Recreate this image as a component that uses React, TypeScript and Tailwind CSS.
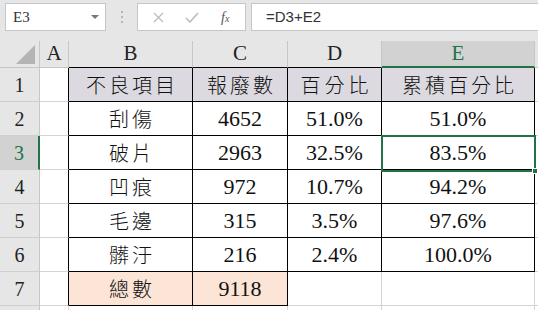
import React from 'react';

type CellProps = {
  className: string;
  children?: React.ReactNode;
};

function Cell({ className, children }: CellProps) {
  return (
    <div className={`box-border shrink-0 flex items-center justify-center h-full ${className}`}>
      {children}
    </div>
  );
}

const rows = [
  { n: '2', item: '刮傷', qty: '4652', pct: '51.0%', cum: '51.0%' },
  { n: '3', item: '破片', qty: '2963', pct: '32.5%', cum: '83.5%' },
  { n: '4', item: '凹痕', qty: '972', pct: '10.7%', cum: '94.2%' },
  { n: '5', item: '毛邊', qty: '315', pct: '3.5%', cum: '97.6%' },
  { n: '6', item: '髒汙', qty: '216', pct: '2.4%', cum: '100.0%' },
];

export default function App() {
  return (
    <div className="w-[538px] h-[310px] overflow-hidden bg-white text-[#111] font-['Liberation_Serif','Times_New_Roman',serif]">
      {/* Formula bar */}
      <div className="h-[41px] bg-[#e6e6e6] flex items-start pt-[3px]">
        <div className="ml-[5px] w-[101px] h-[28px] box-border bg-white border border-[#c6c6c6] flex items-center justify-between pl-[7px] pr-[6px]">
          <span className="text-[15px] text-[#333]">E3</span>
          <span className="w-0 h-0 border-l-[4px] border-r-[4px] border-t-[4px] border-l-transparent border-r-transparent border-t-[#777]" />
        </div>
        <div className="w-[31px] h-[28px] flex flex-col items-center justify-center gap-[3px]">
          <span className="w-[2px] h-[2px] bg-[#b5b5b5]" />
          <span className="w-[2px] h-[2px] bg-[#b5b5b5]" />
          <span className="w-[2px] h-[2px] bg-[#b5b5b5]" />
        </div>
        <div className="w-[109px] h-[28px] box-border bg-white border border-[#c6c6c6] flex items-center">
          <svg className="ml-[15px]" width="11" height="11" viewBox="0 0 11 11">
            <path d="M1 1 L10 10 M10 1 L1 10" stroke="#bcbcbc" strokeWidth="1.3" />
          </svg>
          <svg className="ml-[21px]" width="14" height="11" viewBox="0 0 14 11">
            <path d="M1 6 L5 10 L13 1" stroke="#bcbcbc" strokeWidth="1.6" fill="none" />
          </svg>
          <span className="ml-[22px] text-[14px] italic text-[#555]">
            f<span className="text-[10px]">x</span>
          </span>
        </div>
        <div className="ml-[5px] flex-1 h-[28px] box-border bg-white border border-r-0 border-[#c6c6c6] flex items-center pl-[14px]">
          <span className="text-[15px] text-[#333] font-['Liberation_Sans',sans-serif]">=D3+E2</span>
        </div>
      </div>

      {/* Grid */}
      <div className="relative">
        {/* column headers */}
        <div className="flex h-[27px] bg-[#e6e6e6] text-[21px] text-[#222]">
          <Cell className="w-[40px] border-r border-b border-[#c6c6c6] items-end justify-end pr-[4px] pb-[3px]">
            <svg width="19" height="19" viewBox="0 0 19 19">
              <path d="M19 0 L19 19 L0 19 Z" fill="#b4b4b4" />
            </svg>
          </Cell>
          <Cell className="w-[29px] border-r border-r-[#c6c6c6] border-b border-b-[#c6c6c6]">A</Cell>
          <Cell className="w-[124px] border-r border-r-[#c6c6c6] border-b border-b-black">B</Cell>
          <Cell className="w-[95px] border-r border-r-[#c6c6c6] border-b border-b-black">C</Cell>
          <Cell className="w-[94px] border-r border-r-[#c6c6c6] border-b border-b-black">D</Cell>
          <Cell className="w-[153px] bg-[#d2d2d2] text-[#217346] border-r border-r-[#c6c6c6] border-b-2 border-b-[#217346]">E</Cell>
          <Cell className="w-[3px] border-b border-[#c6c6c6]" />
        </div>

        {/* row 1: table header */}
        <div className="flex h-[34px] text-[20px] font-['Noto_Sans_CJK_TC',sans-serif] font-light">
          <Cell className="w-[40px] bg-[#e6e6e6] text-[#222] font-['Liberation_Serif',serif] font-normal border-r border-r-[#c6c6c6] border-b border-b-[#cfcfcf]">1</Cell>
          <Cell className="w-[29px] border-r border-r-black border-b border-b-[#d4d4d4]" />
          <Cell className="w-[124px] bg-[#dcdae0] border-r border-b border-black tracking-[3px] pl-[3px]">不良項目</Cell>
          <Cell className="w-[95px] bg-[#dcdae0] border-r border-b border-black tracking-[3px] pl-[3px]">報廢數</Cell>
          <Cell className="w-[94px] bg-[#dcdae0] border-r border-b border-black tracking-[4px] pl-[4px]">百分比</Cell>
          <Cell className="w-[153px] bg-[#dcdae0] border-r border-b border-black tracking-[3px] pl-[3px]">累積百分比</Cell>
          <Cell className="w-[3px] border-b border-[#d4d4d4]" />
        </div>

        {rows.map((r) => (
          <div key={r.n} className="flex h-[34px] text-[22px]">
            {r.n === '3' ? (
              <Cell className="w-[40px] bg-[#d2d2d2] text-[20px] text-[#217346] border-r-2 border-r-[#217346] border-b border-b-[#cfcfcf]">{r.n}</Cell>
            ) : (
              <Cell className="w-[40px] bg-[#e6e6e6] text-[20px] text-[#222] border-r border-r-[#c6c6c6] border-b border-b-[#cfcfcf]">{r.n}</Cell>
            )}
            <Cell className="w-[29px] border-r border-r-black border-b border-b-[#d4d4d4]" />
            <Cell className="w-[124px] border-r border-b border-black text-[20px] font-light font-['Noto_Sans_CJK_TC',sans-serif] tracking-[3px] pl-[3px]">{r.item}</Cell>
            <Cell className="w-[95px] border-r border-b border-black">{r.qty}</Cell>
            <Cell className="w-[94px] border-r border-b border-black">{r.pct}</Cell>
            <Cell className="w-[153px] border-r border-b border-black">{r.cum}</Cell>
            <Cell className="w-[3px] border-b border-[#d4d4d4]" />
          </div>
        ))}

        {/* row 7: total */}
        <div className="flex h-[34px] text-[22px]">
          <Cell className="w-[40px] bg-[#e6e6e6] text-[20px] text-[#222] border-r border-r-[#c6c6c6] border-b border-b-[#cfcfcf]">7</Cell>
          <Cell className="w-[29px] border-r border-r-black border-b border-b-[#d4d4d4]" />
          <Cell className="w-[124px] bg-[#fce4d6] border-r border-b border-black text-[20px] font-light font-['Noto_Sans_CJK_TC',sans-serif] tracking-[3px] pl-[3px]">總數</Cell>
          <Cell className="w-[95px] bg-[#fce4d6] border-r border-b border-black">9118</Cell>
          <Cell className="w-[94px] border-r border-b border-[#d4d4d4]" />
          <Cell className="w-[153px] border-r border-b border-[#d4d4d4]" />
          <Cell className="w-[3px] border-b border-[#d4d4d4]" />
        </div>

        {/* row 8 (cut off) */}
        <div className="flex h-[34px]">
          <Cell className="w-[40px] bg-[#e6e6e6] border-r border-[#c6c6c6]" />
          <Cell className="w-[29px] border-r border-[#d4d4d4]" />
          <Cell className="w-[124px] border-r border-[#d4d4d4]" />
          <Cell className="w-[95px] border-r border-[#d4d4d4]" />
          <Cell className="w-[94px] border-r border-[#d4d4d4]" />
          <Cell className="w-[153px] border-r border-[#d4d4d4]" />
        </div>

        {/* active cell E3 */}
        <div className="absolute left-[381px] top-[94px] w-[155px] h-[37px] border-2 border-[#217346] pointer-events-none">
          <div className="absolute right-[-4px] bottom-[-4px] w-[6px] h-[6px] bg-[#217346] border border-white" />
        </div>
      </div>
    </div>
  );
}
